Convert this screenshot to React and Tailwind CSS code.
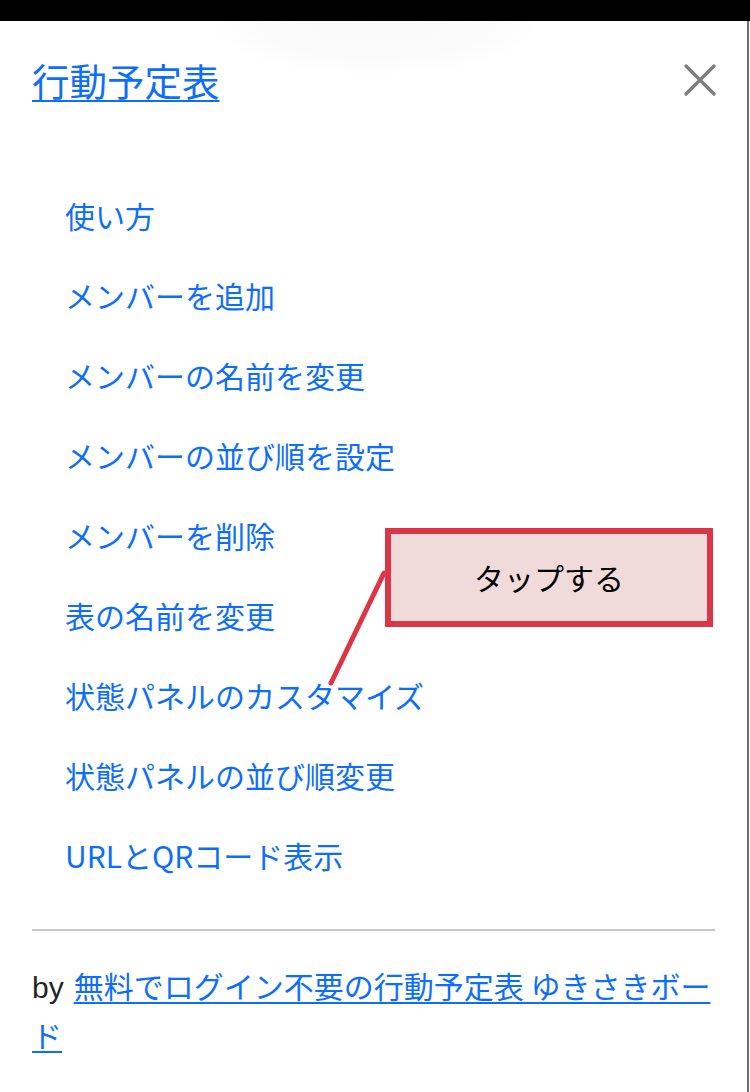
import React from 'react';

const ITEMS = [
  '使い方',
  'メンバーを追加',
  'メンバーの名前を変更',
  'メンバーの並び順を設定',
  'メンバーを削除',
  '表の名前を変更',
  '状態パネルのカスタマイズ',
  '状態パネルの並び順変更',
  'URLとQRコード表示',
];

const jp = { fontFamily: '"Noto Sans CJK JP", "Noto Sans", sans-serif' };

export default function App() {
  return (
    <div className="relative w-[750px] h-[1092px] bg-white overflow-hidden" style={jp}>
      {/* status bar */}
      <div className="h-[21px] bg-black" />

      {/* faint shadow under bar */}
      <div className="absolute top-[21px] left-[210px] w-[330px] h-[54px] bg-[radial-gradient(ellipse_at_top,#f9f9f9_0%,#fbfbfb_50%,rgba(255,255,255,0)_72%)]" />

      <div className="flex h-[1071px]">
        <div className="relative w-[747px] px-[32px]">
          {/* header */}
          <div className="flex items-center justify-between pt-[36px]">
            <a href="#" className="text-[37.5px] leading-[45px] text-[#0d6efd] underline underline-offset-[4px] decoration-[2px]">
              行動予定表
            </a>
            <button className="w-[32px] h-[32px] mr-[-1px]" aria-label="close">
              <svg viewBox="0 0 32 32" className="w-[32px] h-[32px]">
                <path d="M2 2 L30 30 M30 2 L2 30" stroke="#7d7d7d" strokeWidth="3.2" strokeLinecap="round" />
              </svg>
            </button>
          </div>

          {/* menu */}
          <ul className="mt-[73px] flex flex-col">
            {ITEMS.map((t) => (
              <li key={t} className="h-[80px] leading-[80px] pl-[33px] text-[30px] text-[#0d6efd] whitespace-nowrap">
                {t}
              </li>
            ))}
          </ul>

          <div className="mt-[34px] h-[2px] bg-[#c8c8c8]" />

          <p className="mt-[31px] text-[30px] leading-[46px] text-[#212529]">
            <span className="mr-[10px]" style={{ fontFamily: '"Liberation Sans", Arial, sans-serif' }}>by</span>
            <a href="#" className="text-[#0d6efd] underline underline-offset-[4px] decoration-[2px]">
              無料でログイン不要の行動予定表 ゆきさきボード
            </a>
          </p>

          {/* annotation */}
          <svg className="absolute left-0 top-0 w-[747px] h-[1071px] pointer-events-none" viewBox="0 0 747 1071">
            <line x1="384" y1="552" x2="331" y2="662" stroke="#dc3545" strokeWidth="5" strokeLinecap="round" />
          </svg>
          <div className="absolute left-[385px] top-[507px] w-[328px] h-[99px] border-[6px] border-[#dc3545] bg-[#f0dada] flex items-center justify-center text-[30px] text-black">
            タップする
          </div>
        </div>
        <div className="w-[2px] bg-[#707070]" />
        <div className="w-[1px] bg-white" />
      </div>
    </div>
  );
}
